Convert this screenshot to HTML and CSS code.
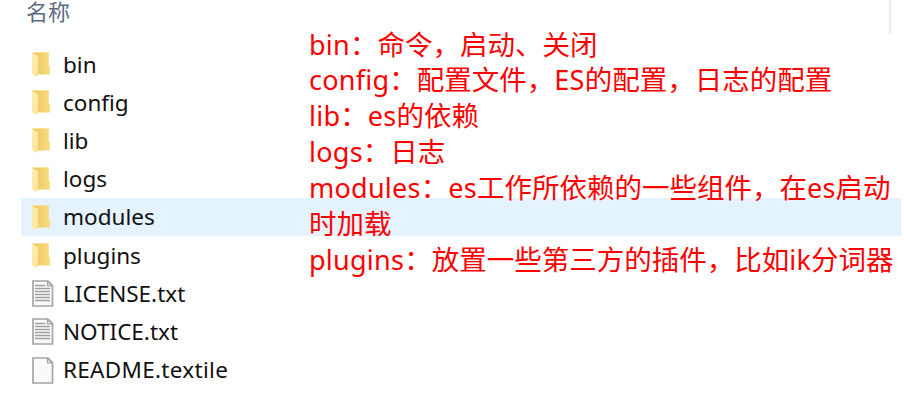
FILE: index.html
```
<!DOCTYPE html>
<html lang="zh-CN">
<head>
<meta charset="utf-8">
<title>名称</title>
<link rel="stylesheet" href="styles.css">
</head>
<body>
<svg width="0" height="0" class="defs" aria-hidden="true">
  <defs>
    <linearGradient id="front" x1="0" y1="0" x2="1" y2="1"><stop offset="0" stop-color="#ffefb8"/><stop offset="1" stop-color="#ffe291"/></linearGradient>
    <linearGradient id="back" x1="0" y1="0" x2="1" y2="0"><stop offset="0" stop-color="#e9c55f"/><stop offset="1" stop-color="#fbdc80"/></linearGradient>
    <symbol id="folder" viewBox="0 0 22 28">
      <path d="M.5 1.5H16.8V14.5L18 16V23.5H5L.5 22Z" fill="url(#back)"/>
      <path d="M.5 1.5H16.8" stroke="#fbe19a"/>
      <path d="M.3 2L6 5V23L4.5 26L.3 23.5Z" fill="url(#front)"/>
    </symbol>
    <symbol id="page" viewBox="0 0 22 28">
      <path d="M1 1H16L20.5 5.5V26H1Z" fill="#fafafa" stroke="#a5a5a5" stroke-width="1.7"/>
      <path d="M15.5 1.3V6H20.3Z" fill="#e2e2e2" stroke="#a5a5a5" stroke-width="1.2"/>
    </symbol>
    <symbol id="text" viewBox="0 0 22 28">
      <use href="#page" width="22" height="28"/>
      <path d="M3 5.5H13.5M3 8.5H18M3 11.5H18M3 14.5H18M3 17.5H18M3 20.5H18" stroke="#a0a0a0" stroke-width="1.3"/>
    </symbol>
  </defs>
</svg>
<main class="window">
  <header class="header"><span>名称</span></header>
  <ul class="files">
    <li><svg><use href="#folder"/></svg><span>bin</span></li>
    <li><svg><use href="#folder"/></svg><span>config</span></li>
    <li><svg><use href="#folder"/></svg><span>lib</span></li>
    <li><svg><use href="#folder"/></svg><span>logs</span></li>
    <li class="selected"><svg><use href="#folder"/></svg><span>modules</span></li>
    <li><svg><use href="#folder"/></svg><span>plugins</span></li>
    <li><svg><use href="#text"/></svg><span>LICENSE.txt</span></li>
    <li><svg><use href="#text"/></svg><span>NOTICE.txt</span></li>
    <li class="wide"><svg><use href="#page"/></svg><span>README.textile</span></li>
  </ul>
  <div class="notes">
    <p><b>bin</b>：命令，启动、关闭</p>
    <p><b>config</b>：配置文件，<b>ES</b>的配置，日志的配置</p>
    <p><b>lib</b>：<b>es</b>的依赖</p>
    <p><b>logs</b>：日志</p>
    <p><b>modules</b>：<b>es</b>工作所依赖的一些组件，在<b>es</b>启动</p>
    <p>时加载</p>
    <p><b>plugins</b>：放置一些第三方的插件，比如<b>ik</b>分词器</p>
  </div>
</main>
</body>
</html>
```
FILE: styles.css
```
* { box-sizing: border-box; margin: 0; padding: 0; }
body { background: #fff; overflow: hidden; }
.defs { position: absolute; }
.window {
  position: relative;
  width: 904px;
  height: 410px;
  overflow: hidden;
  font-family: "Noto Sans", "Noto Sans CJK SC", sans-serif;
}
.header {
  width: 891px;
  height: 34px;
  padding-left: 26px;
  border-right: 2px solid #ececec;
  color: #5b6b85;
  font: 22px/20px "Noto Sans CJK SC", sans-serif;
}
.files { list-style: none; margin: 11px 3px 0 21px; }
.files li {
  display: flex;
  align-items: center;
  height: 38.2px;
  padding-left: 11px;
  gap: 9px;
  font-size: 22.5px;
  line-height: 38px;
  color: #111;
  white-space: nowrap;
}
.files span { padding-top: 1px; }
.files svg { width: 22px; height: 28px; flex: none; margin-top: 2px; }
.files .selected { background: #e5f3ff; }
.files .wide { letter-spacing: 0.3px; }
.notes {
  position: absolute;
  left: 309px;
  top: 25.5px;
  color: #f00;
  font: 27.5px/35.9px "Noto Sans CJK SC", sans-serif;
  white-space: nowrap;
}
.notes p { height: 35.9px; }
.notes b {
  font-family: "Noto Sans", sans-serif;
  font-weight: 400;
  font-size: 27px;
  line-height: 30px;
  letter-spacing: 0.25px;
}
```
